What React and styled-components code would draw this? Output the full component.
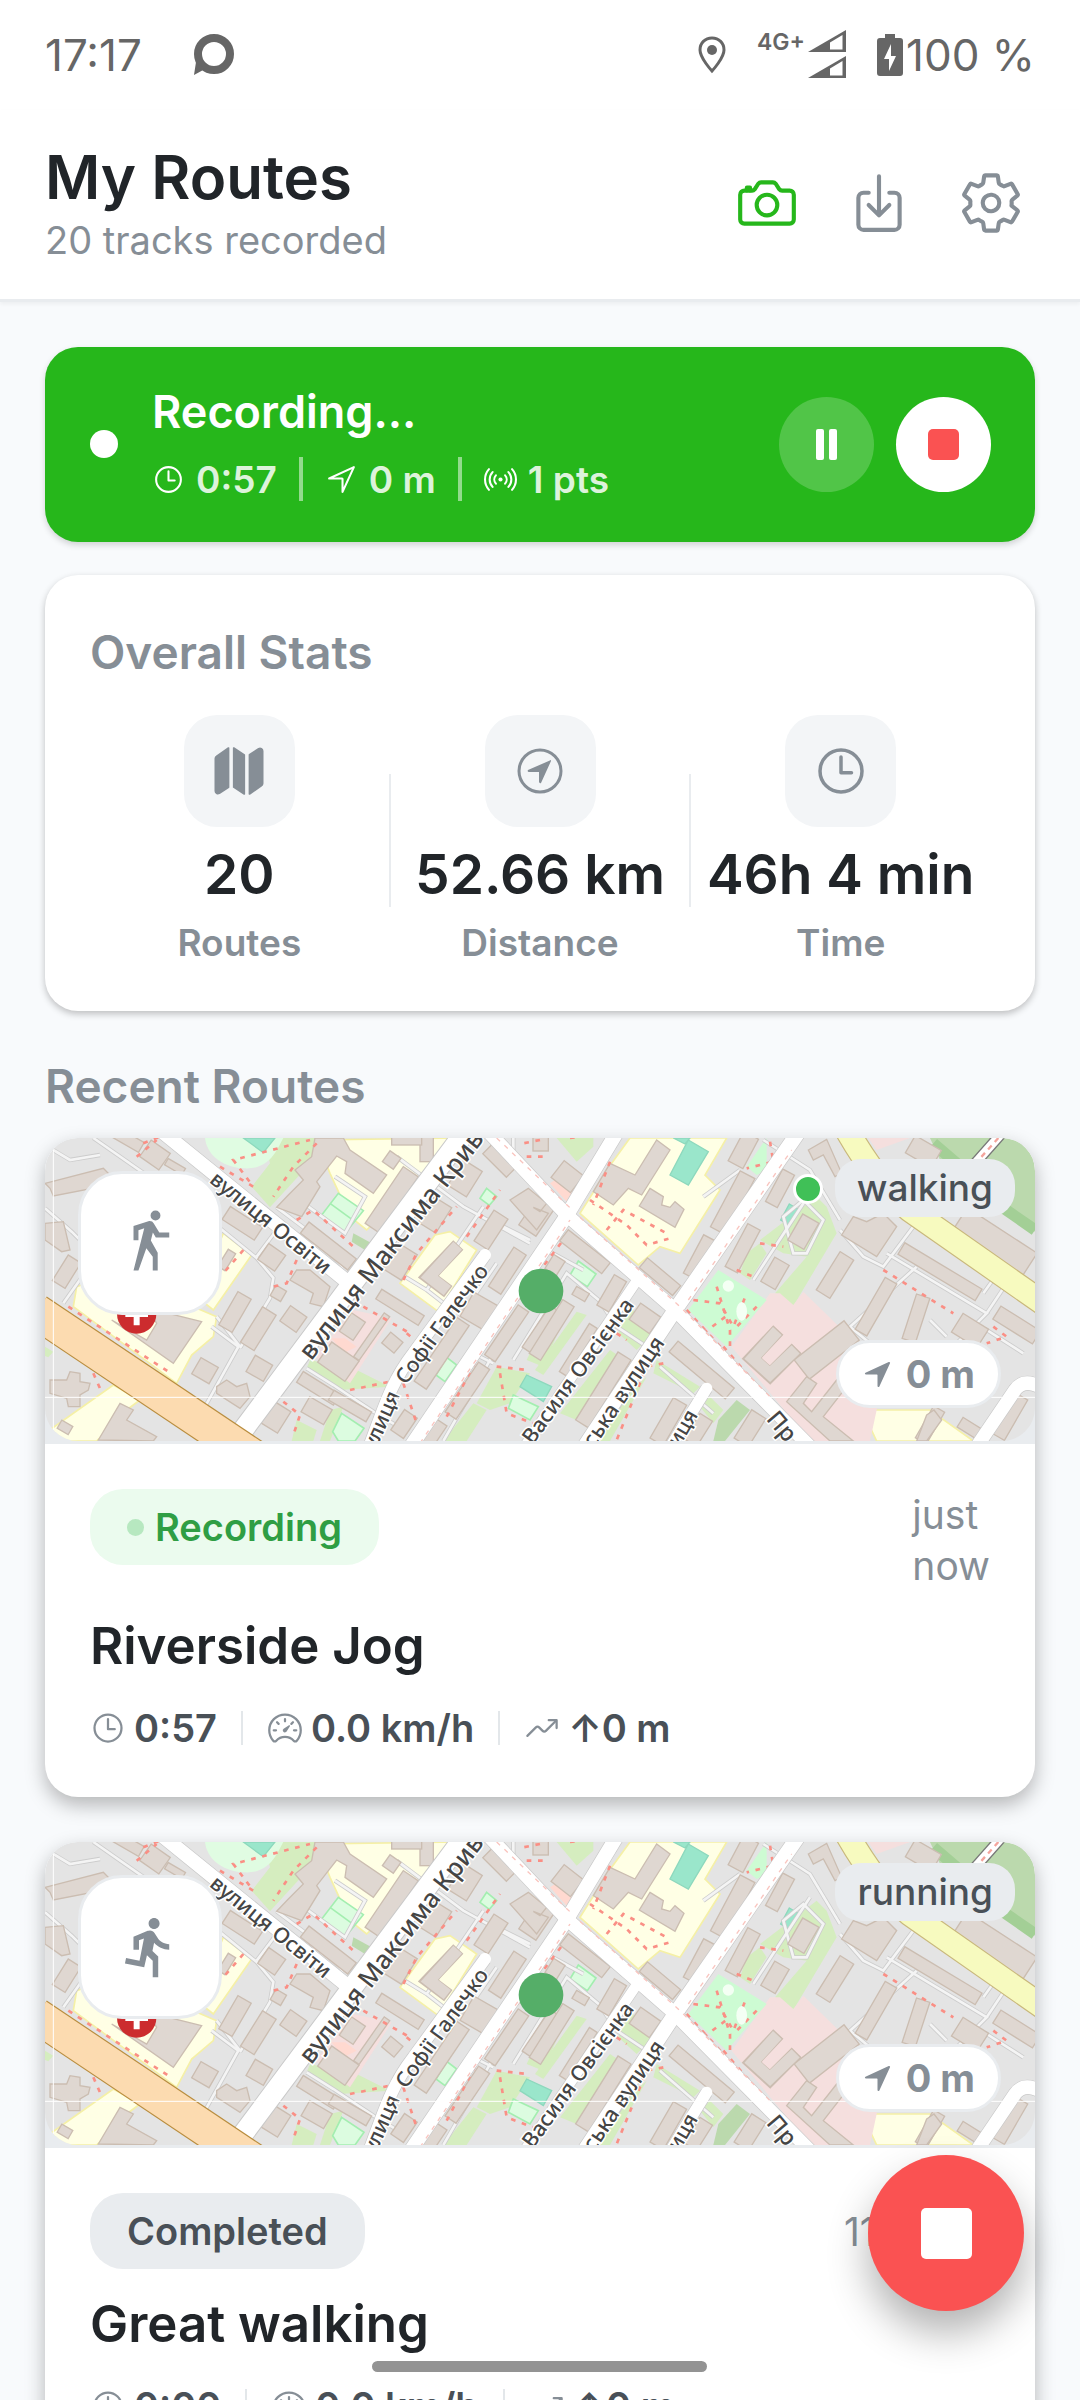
import React from 'react';
import styled, { createGlobalStyle } from 'styled-components';
import {
  IoCameraOutline, IoDownloadOutline, IoSettingsOutline, IoTimeOutline, IoNavigateOutline,
  IoRadioOutline, IoMap, IoSpeedometerOutline, IoTrendingUpOutline, IoNavigate
} from 'react-icons/io5';
import { MdDirectionsRun } from 'react-icons/md';

const GlobalStyle = createGlobalStyle`
  * {
    box-sizing: border-box;
  }
  body {
    margin: 0;
    background: #f8f9fa;
    font-family: Inter, "Liberation Sans", sans-serif;
    color: #212529;
  }
  h1, h2, h3, p {
    margin: 0;
    font-weight: 600;
  }
  svg {
    display: block;
    flex: none;
  }
`;

const Screen = styled.div`
  height: 100vh;
  overflow: hidden;
  background: #f8fafc;
`;
const StatusBar = styled.div`
  display: flex;
  align-items: center;
  justify-content: space-between;
  height: 110px;
  padding: 0 45px;
  background: white;
  color: #666;
  font-size: 44px;
`;
const StatusGroup = styled.div`
  display: flex;
  align-items: center;
  gap: ${props => props.gap}px;
`;
const NetworkLabel = styled.span`
  align-self: flex-start;
  font-size: 23px;
  line-height: 24px;
  font-weight: 600;
`;
const Header = styled.header`
  display: flex;
  align-items: center;
  justify-content: space-between;
  padding: 32px 45px 35px;
  background: white;
  border-bottom: 3px solid #e9ecef;
  box-shadow: 0 2px 4px rgba(0, 0, 0, 0.05);
`;
const PageTitle = styled.h1`
  font-size: 60px;
  line-height: 70px;
`;
const Subtitle = styled.p`
  margin-top: 4px;
  font-size: 38px;
  line-height: 48px;
  font-weight: 400;
  color: #868e96;
`;
const Actions = styled.div`
  display: flex;
  gap: 24px;
`;
const IconButton = styled.button`
  display: flex;
  align-items: center;
  justify-content: center;
  width: 88px;
  height: 88px;
  padding: 0;
  border: none;
  background: none;
  font-size: 66px;
  color: ${props => props.$active ? '#26b71b' : '#868e96'};
`;
const Main = styled.main`
  padding: 45px;
`;
const Banner = styled.section`
  display: flex;
  align-items: center;
  padding: 38px 44px 39px 45px;
  border-radius: 33px;
  background: #26b71b;
  color: white;
  box-shadow: 0 3px 6px rgba(0, 0, 0, 0.16);
`;
const LiveDot = styled.span`
  width: 28px;
  height: 28px;
  margin-right: 34px;
  border-radius: 50%;
  background: white;
`;
const BannerBody = styled.div`
  flex: 1;
`;
const BannerTitle = styled.h2`
  font-size: 45px;
  line-height: 54px;
`;
const BannerMeta = styled.div`
  display: flex;
  align-items: center;
  gap: 22px;
  height: 48px;
  margin-top: 16px;
  font-size: 37px;
  font-weight: 600;
  color: rgba(255, 255, 255, 0.86);
`;
const BannerItem = styled.span`
  display: flex;
  align-items: center;
  gap: 11px;
  svg {
    width: 33px;
    height: 33px;
    color: white;
  }
`;
const BannerDivider = styled.span`
  width: 4px;
  height: 44px;
  background: rgba(255, 255, 255, 0.5);
`;
const RoundButton = styled.button`
  display: flex;
  align-items: center;
  justify-content: center;
  width: 95px;
  height: 95px;
  margin-left: 22px;
  padding: 0;
  border: none;
  border-radius: 50%;
  background: ${props => props.$solid ? 'white' : 'rgba(255, 255, 255, 0.2)'};
`;
const StatsCard = styled.section`
  margin-top: 33px;
  padding: 50px 45px 46px;
  border-radius: 33px;
  background: white;
  box-shadow: 0 3px 7px rgba(0, 0, 0, 0.24);
`;
const SectionTitle = styled.h2`
  font-size: 46px;
  line-height: 54px;
  color: #868e96;
`;
const ListTitle = styled(SectionTitle)`
  margin: 48px 0 25px;
`;
const StatsRow = styled.div`
  display: flex;
  align-items: center;
  margin-top: 36px;
`;
const Stat = styled.div`
  display: flex;
  flex: 1 1 0;
  min-width: 0;
  flex-direction: column;
  align-items: center;
  white-space: nowrap;
`;
const StatDivider = styled.span`
  width: 2px;
  height: 133px;
  background: #e9ecef;
`;
const StatIcon = styled.span`
  display: flex;
  align-items: center;
  justify-content: center;
  width: 111px;
  height: 112px;
  border-radius: 33px;
  background: #f3f5f7;
  color: #868e96;
  font-size: 56px;
`;
const StatValue = styled.span`
  margin-top: 14px;
  font-size: 55px;
  line-height: 66px;
  font-weight: 600;
`;
const StatLabel = styled.span`
  margin-top: 14px;
  font-size: 37px;
  line-height: 44px;
  font-weight: 600;
  color: #868e96;
`;
const RouteCard = styled.article`
  margin-bottom: 45px;
  border-radius: 33px;
  background: white;
  box-shadow: 0 8px 20px rgba(0, 0, 0, 0.28);
`;
const MapBox = styled.div`
  position: relative;
  height: 306px;
  border-bottom: 3px solid #e9ecef;
  border-radius: 33px 33px 0 0;
  background: #e9ecef;
  overflow: hidden;
`;
const MapSvg = styled.svg`
  width: 100%;
  height: 303px;
  border-radius: 33px;
  background: #e4e4e4;
`;
const ActivityIcon = styled.span`
  position: absolute;
  top: 33px;
  left: 33px;
  display: flex;
  align-items: center;
  justify-content: center;
  width: 144px;
  height: 144px;
  border: 3px solid #e9ecef;
  border-radius: 44px;
  background: white;
  color: #868e96;
  font-size: 66px;
`;
const ActivityBadge = styled.span`
  position: absolute;
  top: 21px;
  right: 20px;
  padding: 0 22px;
  border-radius: 26px;
  background: #e9ecef;
  color: #495057;
  font-size: 37px;
  line-height: 58px;
  font-weight: 500;
`;
const LiveMarker = styled.span`
  position: absolute;
  top: 36px;
  right: 212px;
  width: 30px;
  height: 30px;
  border: 3px solid white;
  border-radius: 50%;
  background: #40c057;
`;
const DistanceChip = styled.span`
  position: absolute;
  right: 34px;
  bottom: 33px;
  display: flex;
  align-items: center;
  gap: 13px;
  height: 68px;
  padding: 0 23px;
  border: 3px solid #e9ecef;
  border-radius: 34px;
  background: white;
  color: #868e96;
  font-size: 38px;
  font-weight: 700;
`;
const RouteBody = styled.div`
  padding: 45px;
`;
const RouteHead = styled.div`
  display: flex;
  align-items: center;
  justify-content: space-between;
`;
const StateBadge = styled.span`
  display: flex;
  align-items: center;
  align-self: flex-start;
  gap: 11px;
  height: 76px;
  padding: 0 37px;
  border-radius: 33px;
  background: ${props => props.$live ? '#ebfbee' : '#e9ecef'};
  color: ${props => props.$live ? '#2f9e44' : '#495057'};
  font-size: 38px;
  font-weight: 600;
`;
const BadgeDot = styled.span`
  width: 17px;
  height: 17px;
  border-radius: 50%;
  background: #b7e8c0;
`;
const RouteDate = styled.span`
  font-size: 39px;
  line-height: 51px;
  color: #868e96;
  white-space: pre-line;
`;
const RouteTitle = styled.h3`
  margin-top: 25px;
  font-size: 51px;
  line-height: 60px;
`;
const RouteMeta = styled.div`
  display: flex;
  align-items: center;
  gap: 24px;
  height: 48px;
  margin-top: 28px;
  font-size: 38px;
  font-weight: 600;
  color: #495057;
`;
const MetaItem = styled.span`
  display: flex;
  align-items: center;
  gap: 8px;
  svg {
    width: 36px;
    height: 36px;
    color: #868e96;
  }
`;
const MetaDivider = styled.span`
  width: 2px;
  height: 34px;
  background: #e3e7ea;
`;
const Fab = styled.button`
  position: fixed;
  right: 56px;
  bottom: 89px;
  display: flex;
  align-items: center;
  justify-content: center;
  width: 156px;
  height: 156px;
  padding: 0;
  border: none;
  border-radius: 50%;
  background: #fa5252;
  box-shadow: 0 22px 40px rgba(0, 0, 0, 0.3);
`;
const StopSquare = styled.span`
  width: ${props => props.size}px;
  height: ${props => props.size}px;
  border-radius: 5px;
  background: ${props => props.color};
`;
const HomeBar = styled.div`
  position: fixed;
  bottom: 28px;
  left: 50%;
  width: 335px;
  height: 11px;
  margin-left: -168px;
  border-radius: 6px;
  background: #939393;
`;

// cx, cy, length, thickness, angle
const buildings = [
  [375, 105, 70, 60, 35], [295, 60, 90, 34, 30], [435, 140, 60, 22, 30],
  [110, 455, 90, 45, -58], [637, 310, 115, 46, 33], [725, 412, 62, 58, 35],
  [615, 576, 115, 46, -60], [685, 626, 125, 48, -58], [790, 597, 60, 56, 35], [745, 520, 36, 36, 30],
  [525, 752, 60, 56, 30], [688, 745, 60, 56, 30], [738, 892, 76, 58, -58], [105, 922, 38, 28, 30],
  [895, 378, 180, 42, 38], [1085, 240, 205, 54, -56], [1215, 285, 90, 62, -58], [1305, 175, 90, 66, -58],
  [1110, 425, 90, 66, -58], [1110, 562, 150, 34, 32], [967, 620, 66, 50, -56], [925, 725, 100, 74, 35],
  [1025, 650, 160, 20, -55], [1087, 668, 48, 42, 40], [1432, 452, 140, 44, -57], [1383, 330, 110, 50, -57],
  [1410, 120, 100, 46, 45], [1350, 575, 90, 84, 30], [1235, 700, 230, 44, -56], [1430, 640, 180, 38, -56],
  [1312, 812, 180, 40, -56], [1535, 630, 150, 40, -56], [865, 805, 130, 38, 32], [960, 858, 130, 34, 30],
  [860, 872, 78, 52, 30], [1122, 912, 74, 46, -56], [1212, 940, 80, 40, -56], [590, 420, 60, 26, -58],
  [1190, 80, 40, 90, 0], [1130, 60, 90, 30, 0], [1085, 120, 40, 40, 35],
  [1612, 170, 74, 64, 38], [1520, 290, 100, 62, -56], [1532, 72, 46, 42, 0],
  [2140, 90, 100, 50, -62], [2108, 248, 190, 50, -62], [2010, 412, 130, 44, -62], [2138, 385, 145, 42, -62],
  [2250, 205, 110, 40, -62], [2320, 335, 90, 56, -60], [2235, 460, 84, 50, -60], [2415, 465, 135, 48, -58],
  [2538, 560, 180, 40, -60], [2658, 595, 140, 42, -72], [2730, 455, 270, 40, 31], [2895, 365, 250, 80, 33],
  [2960, 615, 140, 46, 32], [2820, 632, 90, 66, 32], [1665, 395, 160, 42, 38], [1890, 470, 130, 38, 40],
  [1745, 520, 105, 42, -60], [1845, 595, 74, 60, 35], [1565, 630, 190, 40, -58], [1645, 690, 170, 28, -58],
  [1720, 810, 240, 46, -58], [2015, 750, 220, 42, 40], [1575, 435, 50, 40, -58], [1652, 522, 44, 28, 30],
  [2390, 690, 190, 74, -38], [1915, 905, 140, 46, -60], [2005, 930, 90, 44, -58], [2160, 925, 100, 50, -58],
  [2700, 915, 110, 38, -60], [2940, 890, 140, 42, -60], [2820, 925, 70, 34, 32], [2680, 95, 90, 60, 30]
];
const shapes = [
  '45,190 220,145 245,170 240,195 70,228 60,205', '45,310 100,305 120,390 95,395 45,360',
  '800,450 840,450 900,500 880,560 840,550 850,520 780,480', '560,800 590,780 620,800 650,790 660,830 630,865 560,820',
  '245,600 350,660 380,610 365,585 375,570 515,605 430,730', '60,780 110,780 120,755 150,760 150,785 180,790 175,810 150,825 150,860 115,860 110,835 60,820',
  '205,960 270,850 310,870 290,900 380,950 370,963', '1440,240 1495,205 1550,250 1530,275 1510,262 1555,280 1520,330',
  '855,54 940,54 960,90 1070,165 1030,220 945,160 950,125 920,108 860,185 870,200 815,290 740,262 775,225 820,180 795,150 845,110',
  '1880,60 1920,90 1835,225 1795,205 1750,255 1690,215 1740,130 1815,165',
  '1860,205 1900,230 1895,255 1920,262 1935,245 1962,268 1935,322 1828,258',
  '2435,345 2470,290 2510,305 2560,280 2600,320 2540,410',
  '2335,90 2390,58 2435,160 2415,170 2380,105 2350,120', '2270,845 2330,770 2360,790 2320,850 2345,875 2420,780 2450,800 2380,890 2470,963 2400,963',
  '2690,885 2712,870 2735,900 2690,963 2660,963'
];
const lawns = [
  '700,54 870,54 850,120 720,262 665,200 720,130', '840,720 980,750 1080,800 930,810 830,745',
  '1490,720 1560,570 1600,600 1540,740', '1580,54 1690,54 1690,80 1640,125', '1640,575 1670,585 1540,765 1515,750',
  '1400,740 1500,760 1440,850 1380,870 1340,850', '1330,850 1370,870 1310,963 1240,963',
  '2360,230 2390,260 2420,340 2290,558 2235,520 2330,410 2260,400 2190,360', '2150,400 2190,370 2210,400 2160,480 2130,460',
  '1800,560 1870,640 1820,690 1765,640', '1590,880 1740,690 1770,710 1640,900', '1880,720 2010,800 1990,820 1870,760',
  '2010,860 2040,830 2080,870 2050,910', '900,870 940,860 900,963 870,963', '45,680 70,695 55,712 45,708',
  '1780,830 1850,770 1740,963 1710,963', '800,900 860,930 850,963 785,963'
];
const schoolYards = [
  '860,60 1290,54 1010,330 960,290 900,160', '1110,490 1215,345 1260,335 1340,390 1225,575',
  '1745,130 1800,54 2090,54 2025,165 2070,210 1950,400 1890,380 1825,435 1650,280',
  '140,500 220,470 420,530 560,590 550,650 485,705 440,790 130,560', '580,340 665,405 550,570 500,530',
  '45,940 250,795 330,840 290,870 200,963 110,963', '2530,870 2670,870 2700,870 2830,963 2540,963 2515,910'
];
const minorRoads = [
  'M70 90l50 30 90-15M45 265l80 70 60 60M190 54l330 230 160 130 50 60-10 60-90 150M100 550l120-170',
  'M525 860l100-180-80-60M680 410l60-80M830 745l80 50 120 80 100 60M740 262l80 60 120 120M915 170l90 60-60 110-110-80',
  'M1010 400l180 110 90 70M1100 110l200 150 200 110M1190 510l170-250M1330 700l60 30M1450 54v80M1290 590l110-160M1380 300l120 60M560 590l70 90',
  'M1240 963l150-260M1450 720l160-260 120 100M1550 390l110 60M2020 230l110-80M2200 60l140 90 90 150M2170 480l170-260',
  'M2430 330l70 80 60 30 90-120M2570 400l300 180-110 110M2660 440l-200 180 60 50M2870 580l60-90M1720 560l40 60 90 60M2050 880l-160-140',
  'M2700 600l50 50M2860 520l50-70M2980 700l-110-70-90 120M1700 963l200-310M2260 290l60-50 60 60-50 100h-40z'
];
const footPaths = [
  'M440 85l100 75 70 60 90 50M570 140l100 60-60-80 230-60M860 70l-70 70-60 90M340 70l50-20M320 110l60-50M800 300l50-30 120 110',
  'M115 560l300 195M640 390l-60 70M800 420l-30 70-40 10M1000 560l140 80M1120 480l40-80 120-140M1310 350l100-140',
  'M960 810l120-25M1130 640l30 25M760 845l50 40-20 60M190 760l20 45M1400 740l90 10M1410 760l20 120 80 30M1120 790l40 120',
  'M1490 110h60M1740 125l-50 130M1680 240l110 75 60 60 70-20M1730 330l50-60 130 70M2220 65l10 60-80 20M2190 210l-60 110M2190 370l70 10',
  'M1250 890l120-230 230-300M1530 60l-50 10M1400 54l110 110M2120 450l50 20M2560 450l210 130M2890 620l40 30-60 20M1990 540l80 10 40 70 40-100',
  'M1970 570l110 120M2060 500l40 130 0 60M2020 640l80-60M2080 680l130 150M1900 730l-50 10-90 220M2180 560l-60 60M1620 54l90-10M1760 640l30 20'
];

function StreetName({ x, y, angle, size, children }) {
  return (
    <text transform={`translate(${x} ${y}) rotate(${angle})`} fontSize={size} dy="20">{children}</text>
  );
}

function RouteMap() {
  return (
    <MapSvg viewBox="45 54 2970 909" preserveAspectRatio="xMidYMid slice" role="img" aria-label="Route map">
      <g fill="#ffffe5" stroke="#f5f0a6" strokeWidth="5">
        {schoolYards.map((points) => <polygon key={points} points={points} />)}
      </g>
      <g fill="#d5edbf">
        {lawns.map((points) => <polygon key={points} points={points} />)}
      </g>
      <path d="M525 54H760C740 90 720 150 640 145C570 140 530 100 525 54Z" fill="#e0fce2" />
      <polygon points="970,570 1085,595 960,790 855,710" fill="#f5dfde" />
      <polygon points="905,655 940,700 980,680 945,655" fill="#ffd9d0" />
      <polygon points="2720,54 2515,54 2540,90 2640,54" fill="#f5dfde" />
      <polygon points="2220,520 2250,520 2290,555 2320,515 2560,750 2540,870 2520,963 2340,963 2105,680" fill="#f5dfde" />
      <polygon points="1560,190 1590,170 1640,205 1610,245" fill="#ffd9d0" />
      <polygon points="2700,54 3015,54 3015,335 2840,230 2730,120" fill="#bbd9ad" />
      <path d="M2710 70L2780 130M2900 250L3015 330" stroke="#a3cf96" strokeWidth="34" />
      <polygon points="2065,450 2210,540 2090,680 1975,570" fill="#cdfbd3" />
      <polygon points="2210,54 2150,140 2180,165 2210,150" fill="#cdfbd3" />
      <polygon points="2120,840 2160,870 2085,963 2050,963 2065,900" fill="#bbd9ad" />
      <polygon points="970,340 1025,370 1005,390 965,365" fill="#bbd9ad" />
      <g fill="#9ae6cb" stroke="#8dd8bd" strokeWidth="4">
        <polygon points="640,54 735,54 700,98" />
        <polygon points="1975,60 2035,95 1975,195 1920,165" />
        <polygon points="1930,54 1980,54 1965,72" />
        <polygon points="2278,252 2305,268 2278,316 2252,300" />
        <polygon points="1490,765 1565,800 1540,845 1470,800" />
      </g>
      <g fill="#dcfce0" stroke="#a3eeb0" strokeWidth="5">
        <polygon points="925,220 1000,272 945,340 875,285" />
        <path d="M900 250L975 305" />
        <polygon points="1370,205 1400,230 1378,256 1350,235" />
        <polygon points="935,880 1002,925 975,963 925,963 908,935" />
        <polygon points="1250,712 1280,735 1245,785 1218,765" />
        <polygon points="1645,423 1698,462 1672,500 1620,465" />
        <polygon points="1450,825 1525,860 1500,900 1435,865" />
      </g>
      <g fill="none" stroke="#cccccc" strokeWidth="13">
        {minorRoads.map((d) => <path key={d} d={d} />)}
      </g>
      <g fill="none" stroke="#f4f4f4" strokeWidth="8">
        {minorRoads.map((d) => <path key={d} d={d} />)}
      </g>
      <g fill="#dfd7d1" stroke="#cbbdb1" strokeWidth="4">
        {buildings.map(([x, y, w, h, angle]) => (
          <rect key={`${x}_${y}`} x={-w / 2} y={-h / 2} width={w} height={h} transform={`translate(${x} ${y}) rotate(${angle})`} />
        ))}
        {shapes.map((points) => <polygon key={points} points={points} />)}
      </g>
      <path d="M1285 375L1195 470L1255 515M2245 630L2165 715L2220 765L2300 685" fill="none" stroke="#cbbdb1" strokeWidth="42" />
      <path d="M1283 377L1198 470L1252 512M2242 633L2168 715L2220 762L2297 688" fill="none" stroke="#dfd7d1" strokeWidth="35" />
      <g fill="none" stroke="#fa8f85" strokeWidth="8" strokeDasharray="14 20">
        {footPaths.map((d) => <path key={d} d={d} />)}
      </g>
      <g fill="none" stroke="#c9c9c9" strokeLinejoin="round">
        <path d="M400 38L960 492" strokeWidth="46" />
        <path d="M590 996L1310 30" strokeWidth="66" />
        <path d="M1010 1000C1060 870 1080 790 1150 700L1365 405" strokeWidth="40" />
        <path d="M1140 983L1605 295L1765 30" strokeWidth="46" />
        <path d="M1370 30L1610 285L1930 565L2345 985" strokeWidth="44" />
        <path d="M1660 985L1935 570L2310 30" strokeWidth="48" />
        <path d="M1815 490L1480 985" strokeWidth="34" />
        <path d="M2030 805L1920 983" strokeWidth="38" />
        <path d="M2840 980L2955 810Q2980 775 3030 800" strokeWidth="44" />
      </g>
      <g fill="none" stroke="white" strokeLinecap="round" strokeLinejoin="round">
        <path d="M400 38L960 492" strokeWidth="42" />
        <path d="M590 996L1310 30" strokeWidth="60" />
        <path d="M1010 1000C1060 870 1080 790 1150 700L1365 405" strokeWidth="36" />
        <path d="M1140 983L1605 295L1765 30" strokeWidth="42" />
        <path d="M1370 30L1610 285L1930 565L2345 985" strokeWidth="40" />
        <path d="M1660 985L1935 570L2310 30" strokeWidth="44" />
        <path d="M1815 490L1480 985" strokeWidth="30" />
        <path d="M2030 805L1920 983" strokeWidth="34" />
        <path d="M2840 980L2955 810Q2980 775 3030 800" strokeWidth="40" />
      </g>
      <path d="M1170 970L1620 300M1400 54L1625 268M1650 292L1950 560L2220 830M1975 540L2285 90" fill="none" stroke="#f9c4be" strokeWidth="4" strokeDasharray="14 18" />
      <path d="M2445 20Q2540 190 2640 270L3040 550" fill="none" stroke="#c9b87c" strokeWidth="76" />
      <path d="M2445 20Q2540 190 2640 270L3040 550" fill="none" stroke="#f7fabf" strokeWidth="69" />
      <path d="M2915 40L2760 215" stroke="#777" strokeWidth="34" />
      <path d="M2915 40L2760 215" stroke="white" strokeWidth="26" />
      <path d="M2905 54L2765 210" stroke="#f4a59d" strokeWidth="7" strokeDasharray="16 14" />
      <path d="M20 575L720 1044" stroke="#b98d3e" strokeWidth="109" />
      <path d="M20 575L720 1044" stroke="#fcdbb0" strokeWidth="102" />
      <circle cx="320" cy="582" r="59" fill="#cc2c2e" />
      <path d="M320 548V616M286 582H354" stroke="white" strokeWidth="18" />
      <circle cx="2095" cy="498" r="17" fill="#f4fff4" />
      <ellipse cx="2135" cy="574" rx="16" ry="28" fill="#f4fff4" />
      <g fill="#454545" stroke="white" strokeWidth="9" paintOrder="stroke" fontFamily="'Noto Sans', sans-serif" fontWeight="500">
        <StreetName x={548} y={170} angle={39} size={64}>вулиця Освіти</StreetName>
        <StreetName x={828} y={712} angle={-52} size={77}>вулиця Максима Криво</StreetName>
        <StreetName x={1018} y={985} angle={-66} size={63}>улиця</StreetName>
        <StreetName x={1112} y={785} angle={-54} size={63}>Софії Галечко</StreetName>
        <StreetName x={1492} y={965} angle={-54} size={64}>Василя Овсієнка</StreetName>
        <StreetName x={1675} y={975} angle={-56} size={65}>ська вулиця</StreetName>
        <StreetName x={1930} y={975} angle={-60} size={63}>иця</StreetName>
        <StreetName x={2222} y={885} angle={50} size={70}>Пр</StreetName>
      </g>
      <path d="M70 54V963M45 832H3015" stroke="white" strokeWidth="3" />
      <circle cx="1533" cy="513" r="67" fill="#55ae68" />
    </MapSvg>
  );
}

function WalkIcon() {
  return (
    <svg width="66" height="66" viewBox="0 0 24 24" fill="currentColor">
      <path d="M14.12 10H19V8.2h-3.62l-2-3.33A1.7 1.7 0 0 0 11.92 4c-.18 0-.34.03-.5.08L6 5.8V11h1.8V7.33l2.11-.66L6 22h1.8l2.87-8.11L13 17v5h1.8v-6.41l-2.49-4.54.73-2.87M14 3.8a1.8 1.8 0 1 0 0-3.6 1.8 1.8 0 0 0 0 3.6" />
    </svg>
  );
}

function StatusIcons() {
  return (
    <StatusGroup gap={31}>
      <svg width="28" height="38" viewBox="0 0 28 38" fill="none">
        <path d="M14 2C7 2 2 7 2 14c0 8 12 21 12 21s12-13 12-21c0-7-5-12-12-12z" stroke="#666" strokeWidth="3" />
        <circle cx="14" cy="14" r="5" fill="#666" />
      </svg>
      <StatusGroup gap={3}>
        <NetworkLabel>4G+</NetworkLabel>
        <svg width="38" height="50" viewBox="0 0 38 50">
          {[0, 26].map((y) => (
            <g key={y} transform={`translate(0 ${y})`}>
              <path d="M0 22L38 0v22z" fill="#666" />
              <path d="M22 12.500L34.500 5v14.500H22z" fill="white" />
            </g>
          ))}
        </svg>
      </StatusGroup>
      <StatusGroup gap={3}>
        <svg width="26" height="42" viewBox="0 0 26 42">
          <path d="M8 0h10v4h5q3 0 3 3v32q0 3-3 3H3q-3 0-3-3V7q0-3 3-3h5z" fill="#666" />
          <path d="M14 10L7 25h5v12l7-15h-5z" fill="white" />
        </svg>
        100 %
      </StatusGroup>
    </StatusGroup>
  );
}

const stats = [
  { label: 'Routes', value: '20', icon: <IoMap /> },
  {
    label: 'Distance',
    value: '52.66 km',
    icon: (
      <svg width="56" height="56" viewBox="0 0 56 56">
        <circle cx="28" cy="28" r="21" fill="none" stroke="currentColor" strokeWidth="3" />
        <path d="M39 17L16 27q-1 2 1 2h10v10q1 2 2 1l10-22q0-1 0-1z" fill="currentColor" />
      </svg>
    )
  },
  { label: 'Time', value: '46h 4 min', icon: <IoTimeOutline /> }
];

const routes = [
  { title: 'Riverside Jog', activity: 'walking', live: true, date: 'just\nnow', time: '0:57' },
  { title: 'Great walking', activity: 'running', live: false, date: '11m ago', time: '0:00' }
];

function Route({ route }) {
  return (
    <RouteCard>
      <MapBox>
        <RouteMap />
        <ActivityIcon>{route.activity === 'walking' ? <WalkIcon /> : <MdDirectionsRun />}</ActivityIcon>
        {route.live && <LiveMarker />}
        <ActivityBadge>{route.activity}</ActivityBadge>
        <DistanceChip><IoNavigate size={31} />0 m</DistanceChip>
      </MapBox>
      <RouteBody>
        <RouteHead>
          <StateBadge $live={route.live}>
            {route.live && <BadgeDot />}
            {route.live ? 'Recording' : 'Completed'}
          </StateBadge>
          <RouteDate>{route.date}</RouteDate>
        </RouteHead>
        <RouteTitle>{route.title}</RouteTitle>
        <RouteMeta>
          <MetaItem><IoTimeOutline />{route.time}</MetaItem>
          <MetaDivider />
          <MetaItem><IoSpeedometerOutline />0.0 km/h</MetaItem>
          <MetaDivider />
          <MetaItem><IoTrendingUpOutline />↑0 m</MetaItem>
        </RouteMeta>
      </RouteBody>
    </RouteCard>
  );
}

function App() {
  return (
    <Screen>
      <GlobalStyle />
      <StatusBar>
        <StatusGroup gap={52}>
          17:17
          <svg width="40" height="42" viewBox="0 0 40 42">
            <circle cx="20" cy="20" r="16" fill="none" stroke="#666" strokeWidth="8" />
            <path d="M2 28L0 41l11-6z" fill="#666" />
          </svg>
        </StatusGroup>
        <StatusIcons />
      </StatusBar>
      <Header>
        <div>
          <PageTitle>My Routes</PageTitle>
          <Subtitle>20 tracks recorded</Subtitle>
        </div>
        <Actions>
          <IconButton $active aria-label="Camera"><IoCameraOutline /></IconButton>
          <IconButton aria-label="Import"><IoDownloadOutline /></IconButton>
          <IconButton aria-label="Settings"><IoSettingsOutline /></IconButton>
        </Actions>
      </Header>
      <Main>
        <Banner>
          <LiveDot />
          <BannerBody>
            <BannerTitle>Recording...</BannerTitle>
            <BannerMeta>
              <BannerItem><IoTimeOutline />0:57</BannerItem>
              <BannerDivider />
              <BannerItem><IoNavigateOutline />0 m</BannerItem>
              <BannerDivider />
              <BannerItem><IoRadioOutline />1 pts</BannerItem>
            </BannerMeta>
          </BannerBody>
          <RoundButton aria-label="Pause">
            <svg width="22" height="31" viewBox="0 0 22 31" fill="white">
              <rect width="8" height="31" rx="2" />
              <rect x="13" width="8" height="31" rx="2" />
            </svg>
          </RoundButton>
          <RoundButton $solid aria-label="Stop"><StopSquare size={31} color="#fa5252" /></RoundButton>
        </Banner>
        <StatsCard>
          <SectionTitle>Overall Stats</SectionTitle>
          <StatsRow>
            {stats.map((stat, i) => (
              <React.Fragment key={stat.label}>
                {i > 0 && <StatDivider />}
                <Stat>
                  <StatIcon>{stat.icon}</StatIcon>
                  <StatValue>{stat.value}</StatValue>
                  <StatLabel>{stat.label}</StatLabel>
                </Stat>
              </React.Fragment>
            ))}
          </StatsRow>
        </StatsCard>
        <ListTitle>Recent Routes</ListTitle>
        {routes.map((route) => <Route key={route.title} route={route} />)}
      </Main>
      <Fab aria-label="Stop recording"><StopSquare size={51} color="white" /></Fab>
      <HomeBar />
    </Screen>
  );
}

export default App;
